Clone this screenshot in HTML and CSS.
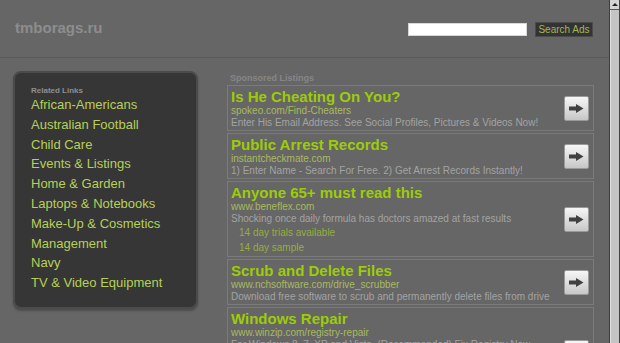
FILE: index.html
```html
<!DOCTYPE html>
<html lang="en">
<head>
  <meta charset="UTF-8">
  <title>tmborags.ru</title>
  <link rel="stylesheet" href="styles.css">
</head>
<body>
<div class="page">
  <div class="site">

    <!-- header -->
    <div class="top">
      <div class="logo">tmborags.ru</div>
      <form class="search" onsubmit="return false;">
        <input class="search-input" type="text">
        <button class="search-btn" type="submit">Search Ads</button>
      </form>
    </div>

    <div class="content">
      <!-- related links -->
      <div class="related">
        <div class="related-title">Related Links</div>
        <ul class="related-list">
          <li><a href="#">African-Americans</a></li>
          <li><a href="#">Australian Football</a></li>
          <li><a href="#">Child Care</a></li>
          <li><a href="#">Events &amp; Listings</a></li>
          <li><a href="#">Home &amp; Garden</a></li>
          <li><a href="#">Laptops &amp; Notebooks</a></li>
          <li><a href="#">Make-Up &amp; Cosmetics</a></li>
          <li><a href="#">Management</a></li>
          <li><a href="#">Navy</a></li>
          <li><a href="#">TV &amp; Video Equipment</a></li>
        </ul>
      </div>

      <!-- sponsored listings -->
      <div class="listings">
        <div class="listings-title">Sponsored Listings</div>

        <div class="ad">
          <div class="ad-text">
            <a class="ad-title" href="#">Is He Cheating On You?</a>
            <div class="ad-url">spokeo.com/Find-Cheaters</div>
            <div class="ad-desc">Enter His Email Address. See Social Profiles, Pictures &amp; Videos Now!</div>
          </div>
          <a class="ad-go" href="#"><svg width="25" height="25" viewBox="0 0 25 25"><path d="M5 10.5h7V8l7.5 4.5-7.5 4.5v-2.5H5z" fill="#404040"/></svg></a>
        </div>

        <div class="ad">
          <div class="ad-text">
            <a class="ad-title" href="#">Public Arrest Records</a>
            <div class="ad-url">instantcheckmate.com</div>
            <div class="ad-desc">1) Enter Name - Search For Free. 2) Get Arrest Records Instantly!</div>
          </div>
          <a class="ad-go" href="#"><svg width="25" height="25" viewBox="0 0 25 25"><path d="M5 10.5h7V8l7.5 4.5-7.5 4.5v-2.5H5z" fill="#404040"/></svg></a>
        </div>

        <div class="ad">
          <div class="ad-text">
            <a class="ad-title" href="#">Anyone 65+ must read this</a>
            <div class="ad-url">www.beneflex.com</div>
            <div class="ad-desc">Shocking once daily formula has doctors amazed at fast results</div>
            <a class="ad-sub" href="#">14 day trials available</a>
            <a class="ad-sub" href="#">14 day sample</a>
          </div>
          <a class="ad-go" href="#"><svg width="25" height="25" viewBox="0 0 25 25"><path d="M5 10.5h7V8l7.5 4.5-7.5 4.5v-2.5H5z" fill="#404040"/></svg></a>
        </div>

        <div class="ad">
          <div class="ad-text">
            <a class="ad-title" href="#">Scrub and Delete Files</a>
            <div class="ad-url">www.nchsoftware.com/drive_scrubber</div>
            <div class="ad-desc">Download free software to scrub and permanently delete files from drive</div>
          </div>
          <a class="ad-go" href="#"><svg width="25" height="25" viewBox="0 0 25 25"><path d="M5 10.5h7V8l7.5 4.5-7.5 4.5v-2.5H5z" fill="#404040"/></svg></a>
        </div>

        <div class="ad ad-tall">
          <div class="ad-text">
            <a class="ad-title" href="#">Windows Repair</a>
            <div class="ad-url">www.winzip.com/registry-repair</div>
            <div class="ad-desc">For Windows 8, 7, XP and Vista. (Recommended) Fix Registry Now</div>
          </div>
          <a class="ad-go" href="#"><svg width="25" height="25" viewBox="0 0 25 25"><path d="M5 10.5h7V8l7.5 4.5-7.5 4.5v-2.5H5z" fill="#404040"/></svg></a>
        </div>
      </div>
    </div>
  </div>

  <!-- fake window scrollbar -->
  <div class="scrollbar">
    <div class="sb-up"></div>
    <div class="sb-thumb"></div>
  </div>
</div>
</body>
</html>
```

FILE: styles.css
```css
* {
  margin: 0;
  padding: 0;
  box-sizing: border-box;
}
html, body {
  height: 100%;
  overflow: hidden;
  background: #666666;
  font-family: "Liberation Sans", Arial, sans-serif;
}
a {
  text-decoration: none;
}

.page {
  display: flex;
  height: 100%;
}
.site {
  width: 609px;
  flex: none;
}

/* header */
.top {
  display: flex;
  align-items: flex-start;
  height: 58px;
  padding: 19px 16px 0 15px;
  border-bottom: 1px solid #595959;
}
.logo {
  font-size: 15px;
  font-weight: bold;
  line-height: 17px;
  color: #8d8d8d;
}
.search {
  display: flex;
  align-items: center;
  gap: 8px;
  margin-left: auto;
  margin-top: 3px;
}
.search-input {
  width: 119px;
  height: 13px;
  border: 1px solid #d8d8d8;
  background: #fff;
}
.search-btn {
  width: 58px;
  height: 15px;
  padding: 0;
  border: 1px solid #4a4a4a;
  background: #333333;
  color: #a3b55c;
  font-family: "Liberation Sans", Arial, sans-serif;
  font-size: 10px;
  line-height: 13px;
}

/* content */
.content {
  display: flex;
  align-items: flex-start;
  padding-top: 13px;
}

.related {
  width: 185px;
  margin-left: 13px;
  padding: 13px 16px 14px 16px;
  background: #363636;
  border: 2px solid #4b4b4b;
  border-radius: 8px;
  box-shadow: 0 2px 2px rgba(0,0,0,0.25);
}
.related-title {
  font-size: 8px;
  font-weight: bold;
  line-height: 9px;
  color: #8f8f8f;
}
.related-list {
  list-style: none;
}
.related-list li {
  font-size: 13px;
  line-height: 19.8px;
  white-space: nowrap;
}
.related-list a {
  color: #b6d157;
}

.listings {
  width: 367px;
  margin-left: 29px;
}
.listings-title {
  padding-left: 3px;
  font-size: 9px;
  font-weight: bold;
  line-height: 14px;
  color: #868686;
}

.ad {
  display: flex;
  align-items: center;
  margin-bottom: 2px;
  border: 1px solid #7b7b7b;
}
.ad-tall {
  min-height: 91px;
  align-items: flex-start;
}
.ad-tall .ad-go {
  margin-top: 32px;
}
.ad-text {
  flex: 1;
  min-width: 0;
  padding: 2px 0 1px 3px;
  white-space: nowrap;
}
.ad-title {
  display: block;
  font-size: 15px;
  font-weight: bold;
  line-height: 17px;
  color: #9dcc06;
}
.ad-url {
  font-size: 10px;
  line-height: 12px;
  color: #a9ba5c;
}
.ad-desc {
  font-size: 10px;
  line-height: 12px;
  color: #a3a3a3;
}
.ad-sub {
  display: block;
  padding-left: 8px;
  font-size: 10px;
  line-height: 15px;
  color: #97ad3f;
}
.ad-go {
  flex: none;
  display: block;
  width: 25px;
  height: 25px;
  margin: 0 4px 0 6px;
  border: 1px solid #9a9a9a;
  border-radius: 2px;
  background: linear-gradient(#f6f6f6, #c7c7c7);
}
.ad-go svg {
  display: block;
  margin: -1px;
}

/* scrollbar */
.scrollbar {
  width: 11px;
  flex: none;
  border-left: 1px solid #3d3d3d;
  border-right: 1px solid #444;
  background: #c6c6c6;
}
.sb-up {
  height: 10px;
  border-bottom: 1px solid #555;
  background: #d4d4d4;
  position: relative;
}
.sb-up::after {
  content: "";
  position: absolute;
  left: 2px;
  top: 3px;
  border-left: 3px solid transparent;
  border-right: 3px solid transparent;
  border-bottom: 3px solid #222;
}
.sb-thumb {
  height: calc(100% - 10px);
  border-left: 1px solid #e2e2e2;
  background: #c4c4c4;
}
```
